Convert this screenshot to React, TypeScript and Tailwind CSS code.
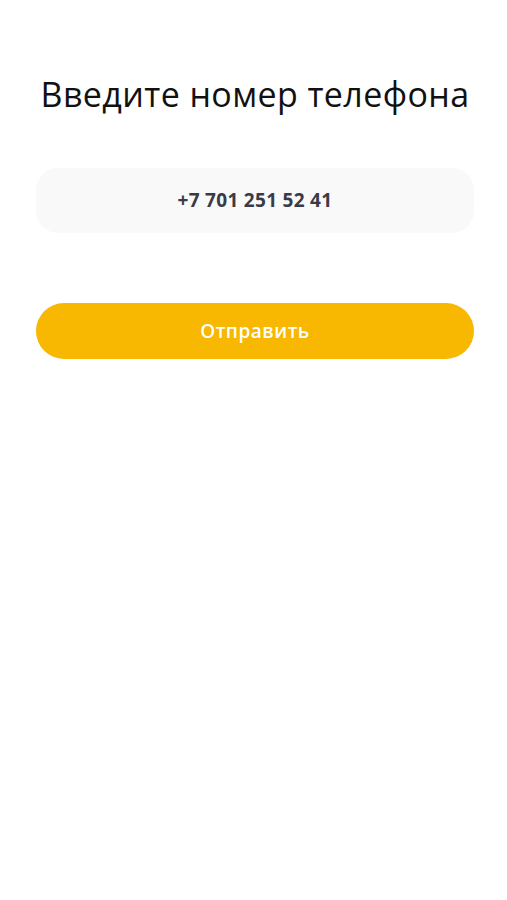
export default function App() {
  return (
    <div className="min-h-[900px] w-full bg-white font-['Open_Sans',sans-serif]">
      <div className="ml-[36px] w-[438px]">
        <h1 className="pt-[71px] text-center text-[34px] font-normal leading-[46px] tracking-[0.4px] text-[#111111]">
          Введите номер телефона
        </h1>
        <div className="mt-[51px] flex h-[65px] items-center justify-center rounded-[22px] bg-[#f9f9fa]">
          <span className="text-[19px] font-bold tracking-[0.3px] text-[#3b3b47]">+7 701 251 52 41</span>
        </div>
        <button className="mt-[70px] flex h-[56px] w-full items-center justify-center rounded-full bg-[#f8b700] text-[19px] font-semibold tracking-[0.5px] text-white">
          Отправить
        </button>
      </div>
    </div>
  );
}
